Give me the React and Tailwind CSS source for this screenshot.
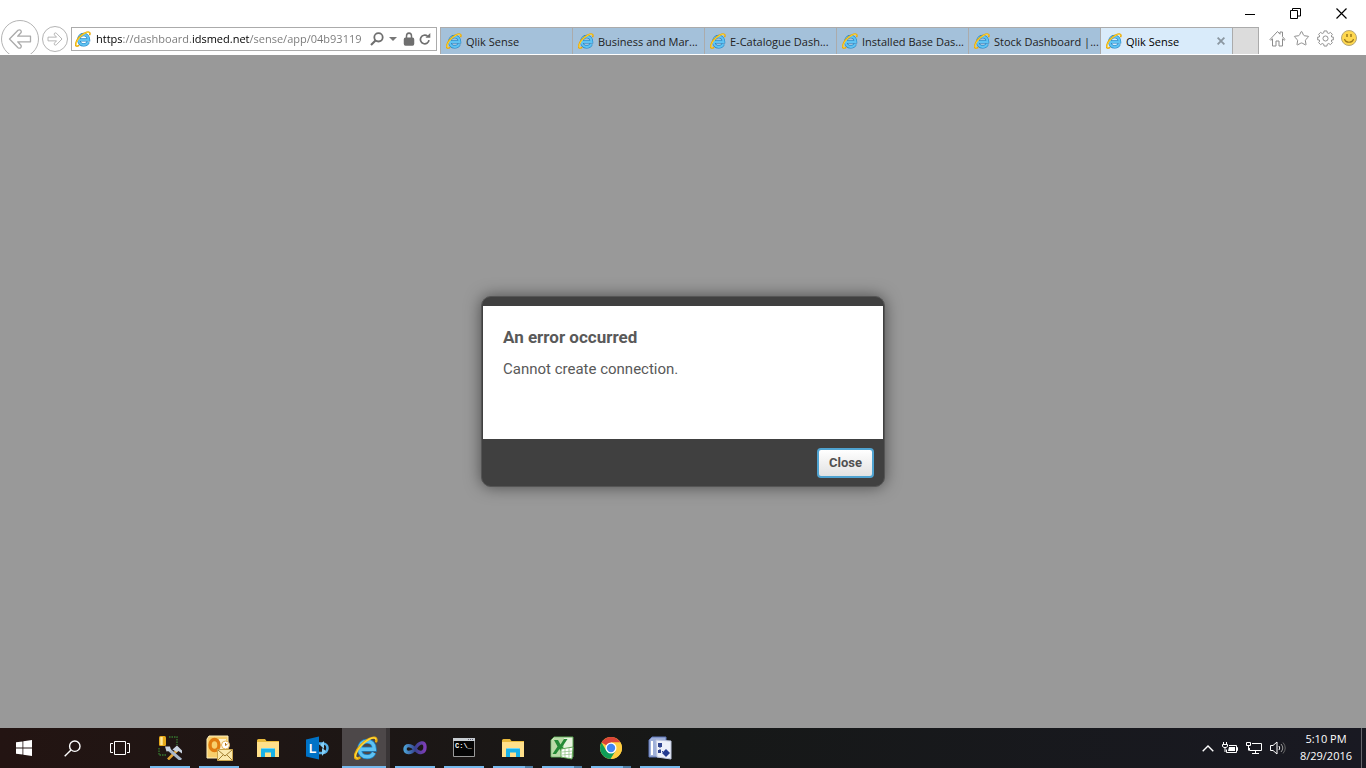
import { Lock, Star } from 'lucide-react'

const TABS = [
  { id: 1, title: 'Qlik Sense' },
  { id: 2, title: 'Business and Mar...' },
  { id: 3, title: 'E-Catalogue Dash...' },
  { id: 4, title: 'Installed Base Das...' },
  { id: 5, title: 'Stock Dashboard |...' },
  { id: 6, title: 'Qlik Sense', active: true },
]

function IeIcon({ className }) {
  return (
    <svg viewBox="0 0 24 24" className={className} fill="none" aria-hidden="true">
      <path d="M6 13.2H20.3C20.3 8.6 17.3 5.3 13 5.3S5.6 8.6 5.6 13.2s3.2 7.6 7.6 7.6c3.2 0 5.5-1.5 6.7-4.1" stroke="#1c7fc0" strokeWidth="5" />
      <path d="M6 13.2H20.3C20.3 8.6 17.3 5.3 13 5.3S5.6 8.6 5.6 13.2s3.2 7.6 7.6 7.6c3.2 0 5.5-1.5 6.7-4.1" stroke="#5fc3f3" strokeWidth="3.4" />
      <path d="M5.5 21.8C2.5 23.8 0 22.5 1.3 18.2C3 12.5 9 6 15 3c5-2.5 8.3-1.6 7.2 2.3" stroke="#e8a90c" strokeWidth="2.4" strokeLinecap="round" />
      <path d="M3.5 22.2C1.5 22 1.3 20 2 17.8C4 12 10 6 15.5 3.2c3.5-1.8 6-1.6 6.3 0" stroke="#ffdc3c" strokeWidth="1.3" strokeLinecap="round" />
    </svg>
  )
}

function ArrowIcon({ className }) {
  return (
    <svg viewBox="0 0 24 20" className={className} fill="none" stroke="#aaa" strokeWidth="1.3" strokeLinejoin="round" aria-hidden="true">
      <path d="M1.5 10 10 1.3Q11.5.3 12.7 1.3Q13.8 2.8 12.7 4L9.7 7.2H22.5v5.6H9.7l3 3.2q1.1 1.2 0 2.7q-1.2 1-2.7 0Z" />
    </svg>
  )
}

function Tab({ title, active }) {
  return (
    <div
      role="tab"
      aria-selected={Boolean(active)}
      className={
        active
          ? 'flex w-[132px] min-w-0 items-center border-t border-l border-[#ababab] bg-[#d9ebfa] pr-[3px] pl-[5px] text-black'
          : 'flex w-[132px] min-w-0 items-center border-t border-l border-[#ababab] bg-[#a4c1da] pl-[5px] text-[#222]'
      }
    >
      <IeIcon className="size-4 shrink-0" />
      <span className="ml-1 flex-1 truncate pt-[2px] text-[11px] leading-4">{title}</span>
      {active && (
        <button type="button" aria-label="Close tab" className="flex size-4 shrink-0 items-center justify-center">
          <svg viewBox="0 0 8 8" className="size-2" stroke="#8b97a1" strokeWidth="1.8">
            <path d="M.6.6l6.8 6.8M7.4.6.6 7.4" />
          </svg>
        </button>
      )}
    </div>
  )
}

function BrowserHeader() {
  return (
    <header className="flex h-[55px] shrink-0 border-b border-white bg-white">
      {/* Back and forward */}
      <div className="flex w-[71px] shrink-0 items-start gap-[3px] overflow-hidden pt-5 pl-px">
        <button type="button" aria-label="Back" className="flex size-[38px] shrink-0 items-center justify-center rounded-full border border-[#b4b4b4]">
          <ArrowIcon className="h-5 w-6" />
        </button>
        <button type="button" aria-label="Forward" className="mt-[6px] flex size-[26px] shrink-0 items-center justify-center rounded-full border border-[#b4b4b4]">
          <ArrowIcon className="h-[14px] w-4 rotate-180" />
        </button>
      </div>

      <div className="flex min-w-0 flex-1 flex-col">
        {/* Window controls */}
        <div className="flex h-[27px] shrink-0 justify-end pr-[2px]">
          <button type="button" aria-label="Minimize" className="flex w-[46px] items-center justify-center">
            <svg viewBox="0 0 11 11" className="size-[11px]" stroke="#000"><path d="M1 6.5h10" /></svg>
          </button>
          <button type="button" aria-label="Restore" className="flex w-[46px] items-center justify-center">
            <svg viewBox="0 0 11 11" className="size-[11px]" fill="none" stroke="#000"><path d="M.5 2.5h7v8h-7zM2.5 2.5v-2h8v7.5h-3" /></svg>
          </button>
          <button type="button" aria-label="Close window" className="flex w-[46px] items-center justify-center">
            <svg viewBox="0 0 11 11" className="size-[11px]" stroke="#000" strokeWidth="1.2"><path d="M.5.5l10 10M10.5.5l-10 10" /></svg>
          </button>
        </div>

        <div className="flex min-h-0 flex-1">
          {/* Address bar */}
          <div className="mr-[3px] flex h-6 min-w-[160px] flex-1 items-center border border-[#ababab] pr-[5px] pl-[3px]">
            <IeIcon className="size-4 shrink-0" />
            <input
              type="text"
              aria-label="Address"
              defaultValue="https://dashboard.idsmed.net/sense/app/04b93119"
              className="ml-[5px] w-0 min-w-0 flex-1 bg-[linear-gradient(90deg,#000_27px,#777_27px,#777_95px,#000_95px,#000_154px,#777_154px)] bg-clip-text text-[11px] leading-4 text-transparent outline-none"
            />
            <button type="button" aria-label="Search" className="ml-1 shrink-0">
              <svg viewBox="0 0 14 14" className="size-[14px]" fill="none" stroke="#6f6f6f" strokeWidth="1.8"><circle cx="8.5" cy="5.3" r="4.2" /><path d="M5.5 8.5 1 13" strokeWidth="2.2" /></svg>
            </button>
            <button type="button" aria-label="Show address list" className="ml-[5px] shrink-0">
              <svg viewBox="0 0 8 4" className="h-1 w-2" fill="#777"><path d="M0 0h8L4 4z" /></svg>
            </button>
            <button type="button" aria-label="Security report" className="ml-[6px] shrink-0">
              <Lock className="h-[14px] w-3 [&_rect]:fill-[#6f6f6f]" color="#6f6f6f" strokeWidth={3} preserveAspectRatio="none" />
            </button>
            <button type="button" aria-label="Refresh" className="ml-1 shrink-0">
              <svg viewBox="0 0 12 12" className="size-3" fill="none" stroke="#6f6f6f" strokeWidth="1.7"><path d="M10 7.2A4.3 4.3 0 1 1 8.5 3.2" /><path d="M6.5 4.7h4.8V0z" fill="#6f6f6f" stroke="none" /></svg>
            </button>
          </div>

          <div role="tablist" className="flex">
            {TABS.map((tab) => (
              <Tab key={tab.id} title={tab.title} active={tab.active} />
            ))}
          </div>
          <button type="button" aria-label="New tab" className="w-[27px] shrink-0 border-x border-t border-[#ababab] bg-[#dcdcdc]" />

          {/* Tools */}
          <div className="flex h-[22px] w-[107px] shrink-0 items-center gap-[7px] pl-[10px]">
            <button type="button" aria-label="Home">
              <svg viewBox="0 0 17 17" className="size-[17px]" fill="none" stroke="#8c8c8c"><path d="M1 9.5 8.5 1.5l2.5 2.7V2h2.5v4.7L16 9.5l-.8.8-1.7-1.5V16h-3.500v-5H7v5H3.500V8.800l-1.700 1.500z" strokeLinejoin="round" /></svg>
            </button>
            <button type="button" aria-label="Favorites">
              <Star className="size-[17px]" color="#8c8c8c" strokeWidth={1.4} />
            </button>
            <button type="button" aria-label="Tools">
              <svg viewBox="-9 -9 18 18" className="size-[17px]" fill="none" stroke="#8c8c8c" strokeLinejoin="round">
                <path d="M-1.5-8h3l.4 2 1.6.7 1.7-1.2 2.1 2.1L6.1-2.7l.6 1.2H8.3v3H6.7l-.6 1.2 1.2 1.7-2.1 2.1-1.7-1.2-1.6.7-.4 2h-3l-.4-2-1.6-.7-1.7 1.2-2.1-2.1 1.2-1.7-.6-1.2H-8.3v-3h1.6l.6-1.2-1.2-1.7 2.1-2.1 1.7 1.2 1.6-.7z" />
                <circle r="2.7" />
              </svg>
            </button>
            <button type="button" aria-label="Send feedback">
              <svg viewBox="0 0 16 16" className="size-4"><circle cx="8" cy="8" r="7.5" fill="#ffd84f" stroke="#b5a678" /><path d="M6 4v3M10 4v3" stroke="#9a781c" strokeWidth="1.5" /><path d="M3.5 9c1 4.3 8 4.3 9 0" fill="none" stroke="#9a781c" strokeWidth="1.2" /></svg>
            </button>
          </div>
        </div>
      </div>
    </header>
  )
}

function ErrorDialog() {
  return (
    <div
      role="alertdialog"
      aria-labelledby="dialog-title"
      aria-describedby="dialog-message"
      className="w-[404px] rounded-[10px] border border-[#555] bg-[#404040] px-px pt-[9px] font-['Roboto',sans-serif] text-[#595959] shadow-[0_0_16px_rgba(0,0,0,0.5)]"
    >
      <div className="min-h-[133px] bg-white px-5 pt-[19px]">
        <h1 id="dialog-title" className="text-[17px] leading-6 font-bold">An error occurred</h1>
        <p id="dialog-message" className="mt-2 text-[15px] leading-6">Cannot create connection.</p>
      </div>
      <div className="flex h-[47px] items-center justify-end pr-[9px]">
        <button type="button" className="h-[30px] w-[57px] rounded-[4px] border-2 border-[#4fa3d1] bg-linear-to-b from-white to-[#e2e2e2] text-[13px] font-bold text-[#505050]">
          Close
        </button>
      </div>
    </div>
  )
}

function ToolsIcon() {
  return (
    <svg viewBox="0 0 24 24" className="size-6" fill="none">
      <path d="M11 1h8v8M1 12v7h8" stroke="#367a30" strokeWidth="1.3" strokeDasharray="1.5 1" />
      <rect x="1" y="0" width="7" height="10" rx="1.5" fill="#e6a91b" /><path d="M3.5 1v8" stroke="#ffe99a" strokeWidth="2.5" />
      <path d="m10 23.5 10-10" stroke="#e2a233" strokeWidth="2.6" />
      <path d="m9 12 14 12" stroke="#a9b8cb" strokeWidth="3" />
      <path d="M7 10.5 8.5 15.5l4.5-1-1-4zM14.5 13.5l4.5-4 5 5v3l-3.500-2.500-2 1z" fill="#c9d3e0" />
    </svg>
  )
}

function OutlookIcon() {
  return (
    <svg viewBox="0 0 28 28" className="size-7" fill="none">
      <path d="M4 2h19v22H2V5z" fill="#f8cf6c" stroke="#fff0bd" />
      <path d="M14 5h7v15h-7z" fill="#fff3d1" />
      <circle cx="20.5" cy="11" r="4" fill="#fff" stroke="#e3b25a" /><path d="M20.500 9v2.500l2-1.500" stroke="#b87419" />
      <ellipse cx="9.5" cy="11" rx="4.5" ry="5.500" stroke="#e07c10" strokeWidth="3.4" />
      <path d="M12.500 15.500h15v11h-15z" fill="#fbe9ac" stroke="#c9a44c" /><path d="m13 16 7 6 7-6M13 26l5-5M27 26l-5-5" stroke="#a07c2c" />
    </svg>
  )
}

function FolderIcon() {
  return (
    <svg viewBox="0 0 24 24" className="size-6">
      <path d="M1 4.5Q1 3 2.5 3H9l1.5 2H23v15H1z" fill="#e8b93c" />
      <path d="M1 6h22v15H1z" fill="#ffe08a" />
      <path d="M5 21v-7.5q0-1.5 1.5-1.5h11q1.5 0 1.5 1.5V21h-4v-4.5H9V21z" fill="#19b2e8" />
      <path d="M6 12.5h12" stroke="#6fd8fa" />
    </svg>
  )
}

function LyncIcon() {
  return (
    <svg viewBox="0 0 24 24" className="size-6">
      <path d="M14 7.5h4a4.5 4.5 0 0 1 4.5 4.5c0 3-2 5-4.5 5h-4" fill="none" stroke="#55b0e8" strokeWidth="2.6" />
      <path d="m15 9 4-4v8zM21 15l-4 5v-8z" fill="#87cff5" />
      <path d="m1 3.5 13-3v23l-13-3z" fill="#0072c6" />
      <text x="4" y="16.5" fontFamily="Liberation Sans" fontWeight="bold" fontSize="12" fill="#fff">L</text>
    </svg>
  )
}

function VisualStudioIcon() {
  return (
    <svg viewBox="0 0 24 24" className="size-6" fill="none">
      <defs>
        <linearGradient id="vs-loop">
          <stop stopColor="#4b9ed3" /><stop offset=".5" stopColor="#36438f" /><stop offset="1" stopColor="#7d3db5" />
        </linearGradient>
      </defs>
      <path d="M12 13C8 8.5 2 8.5 2 13s6 5 10 0C16 5.500 22 5 22 11s-6 7.500-10 2Z" stroke="url(#vs-loop)" strokeWidth="3.4" />
    </svg>
  )
}

function TerminalIcon() {
  return (
    <svg viewBox="0 0 24 24" className="size-6">
      <path d="M1.5 2.5h21v18h-21z" fill="#050505" stroke="#9a9a9a" />
      <path d="M1 2h22v3H1z" fill="#c8cdd2" /><path d="M16 3.5h6" stroke="#667" strokeDasharray="1 1" />
      <text x="3" y="11.5" fontFamily="Liberation Mono" fontWeight="bold" fontSize="7" fill="#fff">C:\_</text>
    </svg>
  )
}

function ExcelIcon() {
  return (
    <svg viewBox="0 0 24 24" className="size-6">
      <path d="M4 1h19v20H1V4z" fill="#e7f3df" stroke="#5aa750" />
      <path d="M2 4 4 2h10v18H2z" fill="#b9dba7" />
      <path d="M4 4h4l2.5 4.5L14 3h3.5l-5 7.5L16 17h-4l-2.5-4L6 18H2.5l5-7.5z" fill="#248a36" />
      <path d="m11 13 12-2-1 12-11-2z" fill="#fff" stroke="#62a757" /><path d="m12 16 10-1M12 19l10-1M15 13v9M19 12v10" stroke="#8bbd7f" strokeWidth=".7" />
    </svg>
  )
}

function ChromeIcon() {
  return (
    <svg viewBox="0 0 24 24" className="size-6">
      <circle cx="12" cy="12" r="11" fill="#ffcd40" />
      <path d="M12 12 2.5 6.5A11 11 0 0 1 21.5 6.5H12z" fill="#db4437" />
      <path d="M2.5 6.5a11 11 0 0 0 9 16.5l5-8L12 12 7.5 15z" fill="#0f9d58" />
      <path d="M12 6.5h9.5A11 11 0 0 1 12 23l5-8z" fill="#ffcd40" />
      <circle cx="12" cy="12" r="5.5" fill="#fff" /><circle cx="12" cy="12" r="4.2" fill="#4285f4" />
    </svg>
  )
}

function DeployIcon() {
  return (
    <svg viewBox="0 0 24 24" className="size-6">
      <path d="M4 1h14v20H1V4z" fill="#9eafd9" stroke="#5f76b8" /><path d="M4 5v14" stroke="#fff" strokeWidth="2" />
      <path d="m8 4 15 1v18l-14-2z" fill="#eef1fa" stroke="#bcc5df" />
      <path d="M10 7h4v4h-4zM10 14h3v3h-3z" fill="#31458f" /><path d="m18 13 4 4-4 4-4-4z" fill="#243b91" /><path d="M12 11v3M14 15.5h2" stroke="#31458f" strokeDasharray="1 1" />
    </svg>
  )
}

const APPS = [
  { name: 'SQL Server tools', icon: <ToolsIcon />, state: 'open' },
  { name: 'Outlook', icon: <OutlookIcon />, state: 'open' },
  { name: 'File Explorer', icon: <FolderIcon />, state: 'pinned' },
  { name: 'Lync', icon: <LyncIcon />, state: 'pinned' },
  { name: 'Internet Explorer', icon: <IeIcon className="size-6" />, state: 'active' },
  { name: 'Visual Studio', icon: <VisualStudioIcon />, state: 'open' },
  { name: 'Command Prompt', icon: <TerminalIcon />, state: 'open' },
  { name: 'Documents', icon: <FolderIcon />, state: 'group' },
  { name: 'Excel', icon: <ExcelIcon />, state: 'group' },
  { name: 'Chrome', icon: <ChromeIcon />, state: 'group' },
  { name: 'Deployment', icon: <DeployIcon />, state: 'open' },
]

const UNDERLINES = {
  pinned: 'h-[2px] w-10',
  open: 'h-[2px] w-10 bg-[#76b9ed]',
  group: 'h-[2px] w-10 border-r-8 border-[#4f7fa6] bg-[#76b9ed]',
  active: 'h-[2px] w-full bg-[#76b9ed]',
}

function AppButton({ name, icon, state }) {
  return (
    <button
      type="button"
      aria-label={name}
      className={
        state === 'active'
          ? 'flex w-12 flex-col items-center border-r-4 border-[#393536] bg-[#4d4849]'
          : 'flex w-12 flex-col items-center'
      }
    >
      <span className={state === 'active' ? 'flex flex-1 items-center pt-[2px] pl-1' : 'flex flex-1 items-center pt-[2px]'}>{icon}</span>
      <span className={UNDERLINES[state]} />
    </button>
  )
}

function Taskbar() {
  return (
    <footer className="flex h-10 shrink-0 bg-linear-to-r from-[#231412] via-[#161817] to-[#191922] text-white">
      <button type="button" aria-label="Start" className="flex w-12 items-center justify-center">
        <svg viewBox="0 0 16 16" className="size-4" fill="#fff"><path d="M0 2.3 6.5 1.4v6.2H0zM7.3 1.3 16 0v7.6H7.3zM0 8.4h6.5v6.2L0 13.7zM7.3 8.4H16V16l-8.7-1.3z" /></svg>
      </button>
      <button type="button" aria-label="Search Windows" className="flex w-12 items-center justify-center">
        <svg viewBox="0 0 17 17" className="size-[17px]" fill="none" stroke="#fff" strokeWidth="1.4"><circle cx="10.8" cy="6.2" r="5.2" /><path d="M7 10 .7 16.3" /></svg>
      </button>
      <button type="button" aria-label="Task view" className="flex w-12 items-center justify-center">
        <svg viewBox="0 0 20 14" className="h-[14px] w-5" fill="none" stroke="#fff"><path d="M4.5.5h11v13h-11zM3 2.5H.5v9H3M17 2.5h2.5v9H17" /></svg>
      </button>

      <nav aria-label="Apps" className="ml-[2px] flex gap-px">
        {APPS.map((app) => (
          <AppButton key={app.name} name={app.name} icon={app.icon} state={app.state} />
        ))}
      </nav>

      {/* Notification area */}
      <div className="ml-auto flex items-center">
        <div className="mr-2 flex items-center gap-2">
          <svg viewBox="0 0 12 7" className="h-[7px] w-3" fill="none" stroke="#fff" strokeWidth="1.4"><path d="m.7 6.3 5.3-5.3 5.3 5.3" /></svg>
          <svg viewBox="0 0 16 12" className="h-3 w-4" fill="none" stroke="#fff"><path d="M7 3.5h7.5v7h-10v-3M14.5 5.5h1v3h-1M1.5 0v2M4.5 0v2M.5 2.5h5v2l-1.5 1h-2l-1.5-1zM3 5v5" /><path d="M7 5h6v4H6z" fill="#fff" stroke="none" /></svg>
          <svg viewBox="0 0 16 14" className="h-[14px] w-4" fill="none" stroke="#fff"><path d="M6 2.5h9.5v7h-12V7M.5 1.5h4v3h-4zM2.5 4.5v5M9.5 9.5v3M6 12.5h7" /></svg>
          <svg viewBox="0 0 16 14" className="h-[14px] w-4" fill="none" stroke="#fff"><path d="M.5 4.5h2.5l4-3.5v12l-4-3.5H.5zM9 5q1.5 2 0 4" /><path d="M11 3q3.5 4 0 8" stroke="#999" /><path d="M13 1.5q4.5 5.5 0 11" stroke="#666" /></svg>
        </div>
        <time dateTime="2016-08-29T17:10" className="flex w-16 flex-col pb-[2px] text-center text-[11px] leading-[17px]">
          <span>5:10 PM</span>
          <span>8/29/2016</span>
        </time>
        <button type="button" aria-label="Show desktop" className="ml-[3px] h-10 w-[5px] border-l border-[#66666c]" />
      </div>
    </footer>
  )
}

export default function App() {
  return (
    <div className="flex h-screen flex-col bg-[#999] font-['Open_Sans',sans-serif]">
      <BrowserHeader />
      <main className="flex min-h-0 flex-1 items-center justify-center">
        <ErrorDialog />
      </main>
      <Taskbar />
    </div>
  )
}
